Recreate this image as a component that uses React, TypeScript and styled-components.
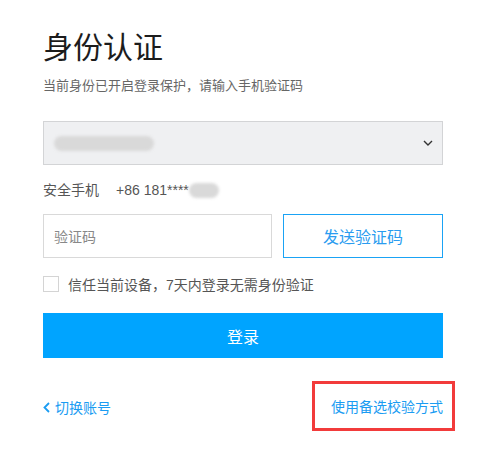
import React from "react";
import styled, { createGlobalStyle } from "styled-components";

const Global = createGlobalStyle`
  html, body { margin: 0; padding: 0; background: #fff; }
  body { font-family: "Liberation Sans", "Noto Sans CJK SC", sans-serif; }
  * { box-sizing: border-box; }
`;

const Page = styled.div`
  width: 487px;
  height: 466px;
  padding: 33px 0 0 43px;
  background: #fff;
`;

const Panel = styled.div`
  width: 400px;
  display: flex;
  flex-direction: column;
`;

const Title = styled.h1`
  margin: 0;
  font-size: 30px;
  line-height: 30px;
  font-weight: 400;
  color: #1c1c1c;
`;

const Subtitle = styled.p`
  margin: 13px 0 0;
  font-size: 13px;
  line-height: 20px;
  color: #666;
`;

const Select = styled.div`
  margin-top: 25px;
  height: 44px;
  background: #eff0f2;
  border: 1px solid #d3d4d6;
  display: flex;
  align-items: center;
  justify-content: space-between;
  padding: 0 9px 0 10px;
`;

const Blur = styled.span<{ $w: number; $h: number }>`
  display: inline-block;
  width: ${(p) => p.$w}px;
  height: ${(p) => p.$h}px;
  background: #d9d9d9;
  border-radius: 8px;
  filter: blur(1.5px);
`;

const PhoneRow = styled.div`
  margin-top: 15px;
  display: flex;
  align-items: center;
  height: 20px;
  font-size: 14px;
  line-height: 20px;
  color: #555;
`;

const PhoneNum = styled.span`
  margin-left: 17px;
  margin-right: 0;
`;

const CodeRow = styled.div`
  margin-top: 14px;
  display: flex;
  gap: 11px;
  height: 44px;
`;

const CodeInput = styled.div`
  flex: 0 0 229px;
  border: 1px solid #d9d9d9;
  display: flex;
  align-items: center;
  padding-left: 10px;
  font-size: 14px;
  color: #888;
`;

const SendButton = styled.div`
  flex: 1;
  border: 1px solid #1aa3f5;
  display: flex;
  align-items: center;
  justify-content: center;
  font-size: 16px;
  color: #2a9cf0;
`;

const TrustRow = styled.div`
  margin-top: 18px;
  display: flex;
  align-items: center;
  height: 16px;
  font-size: 14px;
  color: #555;
`;

const Check = styled.span`
  width: 16px;
  height: 16px;
  border: 1px solid #d4d4d4;
  background: #fff;
  margin-right: 9px;
`;

const LoginButton = styled.div`
  margin-top: 21px;
  height: 45px;
  background: #00a4ff;
  color: #fff;
  font-size: 16px;
  display: flex;
  align-items: center;
  justify-content: center;
`;

const Footer = styled.div`
  margin-top: 24px;
  height: 50px;
  display: flex;
  align-items: center;
  justify-content: space-between;
  font-size: 14px;
  color: #1a9cf2;
`;

const Back = styled.span`
  display: flex;
  align-items: center;
  gap: 5px;
`;

const AltLink = styled.span`
  position: relative;
  line-height: 20px;
`;

const Mark = styled.span`
  position: absolute;
  left: -19px;
  right: -12px;
  top: -16px;
  bottom: -14px;
  border: 3px solid #f23b3b;
  pointer-events: none;
`;

export default function App() {
  return (
    <>
      <Global />
      <Page>
        <Panel>
          <Title>身份认证</Title>
          <Subtitle>当前身份已开启登录保护，请输入手机验证码</Subtitle>
          <Select>
            <Blur $w={100} $h={15} />
            <svg width="10" height="6" viewBox="0 0 10 6">
              <path d="M1 1 L5 5 L9 1" fill="none" stroke="#333" strokeWidth="1.4" />
            </svg>
          </Select>
          <PhoneRow>
            安全手机
            <PhoneNum>+86 181****</PhoneNum>
            <Blur $w={30} $h={15} />
          </PhoneRow>
          <CodeRow>
            <CodeInput>验证码</CodeInput>
            <SendButton>发送验证码</SendButton>
          </CodeRow>
          <TrustRow>
            <Check />
            信任当前设备，7天内登录无需身份验证
          </TrustRow>
          <LoginButton>登录</LoginButton>
          <Footer>
            <Back>
              <svg width="7" height="11" viewBox="0 0 7 11">
                <path d="M6 1 L1.5 5.5 L6 10" fill="none" stroke="#1a9cf2" strokeWidth="1.8" />
              </svg>
              切换账号
            </Back>
            <AltLink>
              使用备选校验方式
              <Mark />
            </AltLink>
          </Footer>
        </Panel>
      </Page>
    </>
  );
}
